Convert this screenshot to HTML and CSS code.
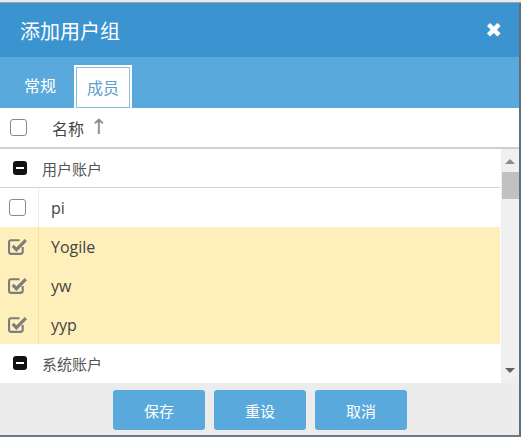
FILE: index.html
```html
<!DOCTYPE html>
<html lang="zh-CN">
<head>
<meta charset="UTF-8">
<title>添加用户组</title>
<link rel="stylesheet" href="styles.css">
</head>
<body>
<div class="backdrop"></div>
<section class="dialog">
  <header class="dlg-head">
    <h1>添加用户组</h1>
    <span class="close">✖</span>
  </header>

  <nav class="tabs">
    <span class="tab">常规</span>
    <span class="tab active">成员</span>
  </nav>

  <div class="thead">
    <span class="cell-chk"><i class="box"></i></span>
    <span class="col-name">名称 <b class="sort">↑</b></span>
  </div>

  <div class="list-wrap">
    <div class="list">
      <div class="group"><i class="minus"></i>用户账户</div>
      <div class="row">
        <span class="cell-chk"><i class="box"></i></span>
        <span class="name">pi</span>
      </div>
      <div class="row sel">
        <span class="cell-chk"><svg class="chk" viewBox="0 0 20 18"><path d="M14 9.5v4.5a2 2 0 0 1-2 2H3a2 2 0 0 1-2-2V5a2 2 0 0 1 2-2h8" fill="none" stroke="#7d7d7d" stroke-width="2"/><path d="M4.5 8.5l3.5 3.5 9-9" fill="none" stroke="#7d7d7d" stroke-width="3"/></svg></span>
        <span class="name">Yogile</span>
      </div>
      <div class="row sel">
        <span class="cell-chk"><svg class="chk" viewBox="0 0 20 18"><path d="M14 9.5v4.5a2 2 0 0 1-2 2H3a2 2 0 0 1-2-2V5a2 2 0 0 1 2-2h8" fill="none" stroke="#7d7d7d" stroke-width="2"/><path d="M4.5 8.5l3.5 3.5 9-9" fill="none" stroke="#7d7d7d" stroke-width="3"/></svg></span>
        <span class="name">yw</span>
      </div>
      <div class="row sel">
        <span class="cell-chk"><svg class="chk" viewBox="0 0 20 18"><path d="M14 9.5v4.5a2 2 0 0 1-2 2H3a2 2 0 0 1-2-2V5a2 2 0 0 1 2-2h8" fill="none" stroke="#7d7d7d" stroke-width="2"/><path d="M4.5 8.5l3.5 3.5 9-9" fill="none" stroke="#7d7d7d" stroke-width="3"/></svg></span>
        <span class="name">yyp</span>
      </div>
      <div class="group"><i class="minus"></i>系统账户</div>
    </div>
    <div class="scrollbar">
      <span class="arr up"></span>
      <span class="thumb"></span>
      <span class="arr down"></span>
    </div>
  </div>

  <footer class="dlg-foot">
    <button class="btn">保存</button>
    <button class="btn">重设</button>
    <button class="btn">取消</button>
  </footer>
</section>
</body>
</html>
```

FILE: styles.css
```css
*,*::before,*::after{box-sizing:border-box;margin:0;padding:0}
body{
  width:521px;
  height:437px;
  overflow:hidden;
  background:#f4f4f4;
  font-family:'Open Sans','Noto Sans CJK SC',sans-serif;
  color:#333;
}

/* strip of the page behind the dialog */
.backdrop{height:3px;background:#e9ecee;border-bottom:1px solid #9aa4ad}

/* === DIALOG === */
.dialog{
  width:521px;
  height:434px;
  display:flex;
  flex-direction:column;
  background:#fff;
  border-right:2px solid #5f6f7e;
  border-bottom:2px solid #6d7a86;
}

.dlg-head{
  height:54px;
  flex:none;
  background:#3b94d0;
  display:flex;
  align-items:center;
  justify-content:space-between;
  padding:0 17px 0 20px;
}
.dlg-head h1{
  font-family:'Noto Sans CJK SC',sans-serif;
  font-weight:400;
  font-size:20px;
  color:#fff;
}
.close{color:#fff;font-size:20px;font-weight:700;font-family:'DejaVu Sans',sans-serif}

/* === TABS === */
.tabs{
  height:51px;
  flex:none;
  background:#5aa9dc;
  display:flex;
  align-items:flex-end;
  padding-left:10px;
  gap:4px;
}
.tab{
  font-family:'Noto Sans CJK SC',sans-serif;
  font-size:16px;
  color:#fff;
  height:43px;
  line-height:41px;
  padding:0 14px;
}
.tab.active{
  background:#fff;
  color:#5b9fcb;
  border:2px solid #fff;
  border-bottom:0;
  box-shadow:inset 0 0 0 1px #86bde0;
  padding:0 11px;
}

/* === TABLE HEAD === */
.thead{
  height:41px;
  flex:none;
  display:flex;
  align-items:center;
  border-bottom:2px solid #cfcfcf;
}
.cell-chk{
  width:39px;
  flex:none;
  display:flex;
  align-items:center;
  justify-content:center;
  padding-right:3px;
  align-self:stretch;
}
.box{
  width:17px;height:17px;
  border:1.5px solid #8a8a8a;
  border-radius:3px;
  background:#fff;
}
.col-name{
  padding-left:13px;
  font-family:'Noto Sans CJK SC',sans-serif;
  font-size:16px;
  color:#444;
  display:flex;
  align-items:center;
}
.sort{font-weight:400;color:#8a8a8a;font-family:'DejaVu Sans',sans-serif;font-size:21px;margin-left:6px;line-height:1}

/* === LIST === */
.list-wrap{
  flex:1;
  display:flex;
  min-height:0;
}
.list{flex:1;overflow:hidden}
.group{
  height:39px;
  display:flex;
  align-items:center;
  font-family:'Noto Sans CJK SC',sans-serif;
  font-size:15px;
  color:#555;
  border-bottom:1px solid #d4d4d4;
}
.group:last-child{border-bottom:0;height:38px}
.minus{
  width:14px;height:14px;
  margin:0 15px 0 13px;
  background:#111;
  border-radius:3px;
  position:relative;
}
.minus::after{
  content:'';
  position:absolute;
  left:3px;right:3px;top:6px;height:2px;
  background:#fff;
}
.row{height:39px;display:flex;align-items:center}
.row .cell-chk{border-right:1px solid #ececec}
.row.sel{background:#fff0bb}
.row.sel .cell-chk{border-right-color:#f1e2aa}
.name{padding-left:12px;font-size:16px;color:#444}
.chk{width:21px;height:19px;margin-left:2px}

/* === SCROLLBAR === */
.scrollbar{
  width:19px;
  flex:none;
  background:#f0f0f0;
  display:flex;
  flex-direction:column;
  align-items:center;
  padding:4px 0;
  border-left:1px solid #fff;
}
.arr{width:0;height:0;border-left:5px solid transparent;border-right:5px solid transparent;margin:6px 0}
.arr.up{border-bottom:5px solid #8c8c8c}
.thumb{width:17px;height:27px;background:#c1c1c1;margin-top:2px}
.arr.down{border-top:5px solid #606060;margin-top:auto}

/* === FOOTER === */
.dlg-foot{
  height:52px;
  flex:none;
  background:#ececec;
  display:flex;
  justify-content:center;
  align-items:flex-start;
  padding:7px 0 0 1px;
  gap:9px;
}
.btn{
  width:92px;height:40px;
  border:0;
  border-radius:3px;
  background:#5aa9dc;
  color:#fff;
  font-family:'Noto Sans CJK SC',sans-serif;
  font-size:15px;
}
```
